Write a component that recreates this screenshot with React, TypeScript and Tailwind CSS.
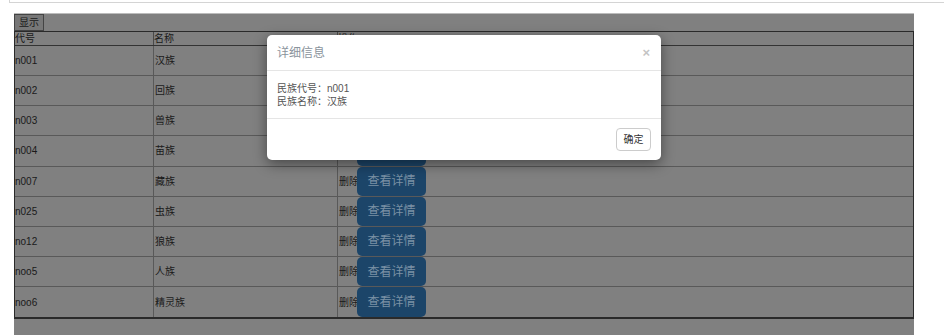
const rows = [
  { code: "n001", name: "汉族" },
  { code: "n002", name: "回族" },
  { code: "n003", name: "兽族" },
  { code: "n004", name: "苗族" },
  { code: "n007", name: "藏族" },
  { code: "n025", name: "虫族" },
  { code: "no12", name: "狼族" },
  { code: "noo5", name: "人族" },
  { code: "noo6", name: "精灵族" },
]

export default function App() {
  return (
    <div
      className="relative w-[944px] h-[335px] bg-white overflow-hidden text-[10px] text-[#1a1a1a]"
      style={{ fontFamily: '"Liberation Sans", "Noto Sans CJK SC", sans-serif' }}
    >
      {/* cut-off box above */}
      <div className="ml-[9px] h-[3px] border-l border-b border-[#d4d4d4]"></div>

      {/* dimmed page area */}
      <div className="mt-[10px] ml-[14px] w-[900px] h-[322px] bg-[#808080] border-t border-[#bcbcbc]">
        <button className="h-[17px] px-[4px] bg-[#777777] border border-[#444444] leading-[15px] text-[#1a1a1a]">
          显示
        </button>

        <div className="w-[900px] border border-[#2a2a2a] border-b-2">
          {/* header */}
          <div className="flex h-[14px] border-b border-[#333333] leading-[13px]">
            <div className="w-[139px] border-r border-[#4a4a4a]">代号</div>
            <div className="w-[184px] border-r border-[#4a4a4a]">名称</div>
            <div className="flex-1">操作</div>
          </div>

          {rows.map((r, i) => (
            <div
              key={r.code}
              className={`flex h-[30.15px] items-stretch ${i < rows.length - 1 ? "border-b border-[#595959]" : ""}`}
            >
              <div className="w-[139px] border-r border-[#595959] flex items-center">{r.code}</div>
              <div className="w-[184px] border-r border-[#595959] flex items-center pl-[1px]">{r.name}</div>
              <div className="flex-1 flex items-stretch">
                <span className="flex items-center pl-[1px]">删除</span>
                <button className="relative -ml-[2px] w-[69px] rounded-[5px] bg-[#1c4569] text-[12px] text-[#7b91a5]">
                  查看详情
                </button>
              </div>
            </div>
          ))}
        </div>
      </div>

      {/* modal */}
      <div className="absolute left-[267px] top-[35px] w-[394px] rounded-[5px] bg-white shadow-[0_4px_14px_rgba(0,0,0,0.45)]">
        <div className="flex h-[36px] items-center justify-between border-b border-[#e5e5e5] pl-[10px] pr-[11px]">
          <span className="text-[12px] text-[#8a939c]">详细信息</span>
          <span className="text-[13px] font-bold leading-none text-[#c4c4c4]">×</span>
        </div>
        <div className="h-[47px] px-[10px] pt-[11px] leading-[13px] text-[#555555]">
          <div>民族代号：n001</div>
          <div>民族名称：汉族</div>
        </div>
        <div className="flex h-[42px] items-start justify-end border-t border-[#e5e5e5] pt-[9px] pr-[10px]">
          <button className="h-[23px] w-[35px] rounded-[4px] border border-[#cccccc] bg-white text-[10px] text-[#333333]">
            确定
          </button>
        </div>
      </div>
    </div>
  )
}
